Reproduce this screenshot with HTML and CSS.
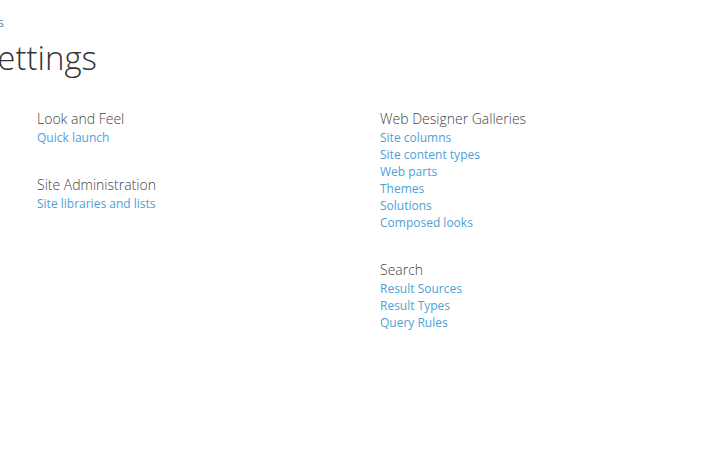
FILE: index.html
```html
<!DOCTYPE html>
<html>
<head>
<meta charset="utf-8">
<link rel="stylesheet" href="styles.css">
</head>
<body>
<div class="page">
  <div class="crumb"><a href="#">Site Settings</a></div>
  <div class="title-wrap"><h1 class="title">Settings</h1></div>
  <div class="columns">
    <div class="col col-left">
      <div class="group">
        <h3 class="group-title">Look and Feel</h3>
        <ul class="links">
          <li><a href="#">Quick launch</a></li>
        </ul>
      </div>
      <div class="group">
        <h3 class="group-title">Site Administration</h3>
        <ul class="links">
          <li><a href="#">Site libraries and lists</a></li>
        </ul>
      </div>
    </div>
    <div class="col col-right">
      <div class="group">
        <h3 class="group-title">Web Designer Galleries</h3>
        <ul class="links">
          <li><a href="#">Site columns</a></li>
          <li><a href="#">Site content types</a></li>
          <li><a href="#">Web parts</a></li>
          <li><a href="#">Themes</a></li>
          <li><a href="#">Solutions</a></li>
          <li><a href="#">Composed looks</a></li>
        </ul>
      </div>
      <div class="group">
        <h3 class="group-title">Search</h3>
        <ul class="links">
          <li><a href="#">Result Sources</a></li>
          <li><a href="#">Result Types</a></li>
          <li><a href="#">Query Rules</a></li>
        </ul>
      </div>
    </div>
  </div>
</div>
</body>
</html>
```
FILE: styles.css
```css
html, body {
  margin: 0;
  padding: 0;
  background: #fff;
  overflow: hidden;
}
body {
  font-family: "Open Sans", "Noto Sans", sans-serif;
  color: #444;
}
.page {
  width: 717px;
  height: 461px;
  overflow: hidden;
}
.crumb {
  display: flex;
  justify-content: flex-end;
  width: 4px;
  margin-top: 14px;
  height: 16px;
  font-size: 13px;
  line-height: 16px;
  white-space: nowrap;
}
.crumb a {
  color: #6a8aa8;
  text-decoration: none;
}
.title-wrap {
  display: flex;
  justify-content: flex-end;
  width: 97px;
  height: 56px;
}
.title {
  margin: 0;
  font-size: 33px;
  font-weight: 300;
  line-height: 56px;
  color: #333;
  white-space: nowrap;
}
.columns {
  display: grid;
  grid-template-columns: 343px 1fr;
  padding: 23px 0 0 37px;
}
.group {
  margin-bottom: 29px;
}
.group-title {
  margin: 0;
  font-size: 14px;
  font-weight: 300;
  line-height: 20px;
  color: #444;
}
.links {
  list-style: none;
  margin: 0;
  padding: 0;
}
.links li {
  font-size: 12px;
  line-height: 17px;
}
.links a {
  color: #4f9fd6;
  text-decoration: none;
}
```
